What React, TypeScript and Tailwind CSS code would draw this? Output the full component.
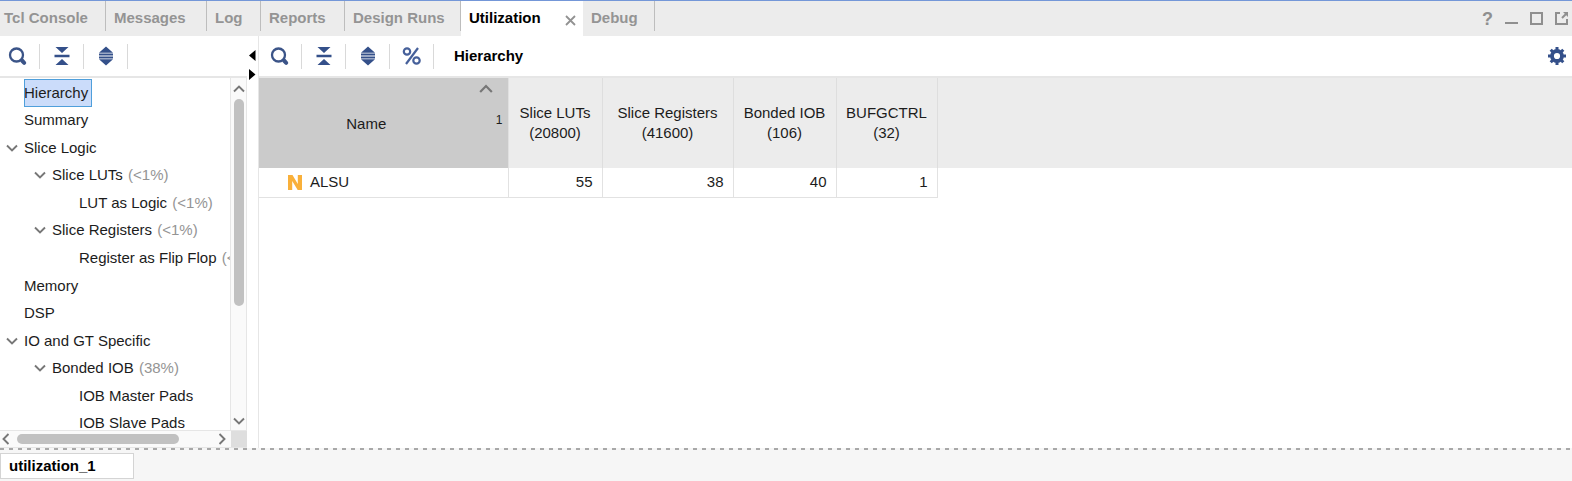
import type { ReactNode } from 'react';

const TABS = [
  { label: 'Tcl Console', cell: 'w-[106px] pl-1' },
  { label: 'Messages', cell: 'w-[101px] pl-2' },
  { label: 'Log', cell: 'w-[54px] pl-2' },
  { label: 'Reports', cell: 'w-[84px] pl-2' },
  { label: 'Design Runs', cell: 'w-[116px] pl-2' },
  { label: 'Utilization', cell: 'w-[122px] pl-2', active: true },
  { label: 'Debug', cell: 'w-[72px] pl-2' },
];

const TREE = [
  { label: 'Hierarchy', depth: 0, selected: true },
  { label: 'Summary', depth: 0 },
  { label: 'Slice Logic', depth: 0, open: true },
  { label: 'Slice LUTs', depth: 1, open: true, note: '(<1%)' },
  { label: 'LUT as Logic', depth: 2, note: '(<1%)' },
  { label: 'Slice Registers', depth: 1, open: true, note: '(<1%)' },
  { label: 'Register as Flip Flop', depth: 2, note: '(<1%)' },
  { label: 'Memory', depth: 0 },
  { label: 'DSP', depth: 0 },
  { label: 'IO and GT Specific', depth: 0, open: true },
  { label: 'Bonded IOB', depth: 1, open: true, note: '(38%)' },
  { label: 'IOB Master Pads', depth: 2 },
  { label: 'IOB Slave Pads', depth: 2 },
];

const INDENT = ['pl-1', 'pl-8', 'pl-[59px]'];

const COLUMNS = [
  { name: 'Slice LUTs', total: '(20800)', value: 55, cell: 'w-[94px]' },
  { name: 'Slice Registers', total: '(41600)', value: 38, cell: 'w-[131px]' },
  { name: 'Bonded IOB', total: '(106)', value: 40, cell: 'w-[103px]' },
  { name: 'BUFGCTRL', total: '(32)', value: 1, cell: 'w-[101px]' },
];

function SearchIcon() {
  return (
    <svg width="20" height="20" viewBox="0 0 20 20" fill="none" stroke="#3b5488">
      <circle cx="8.5" cy="9" r="6.5" strokeWidth="2.3" />
      <path d="M14 14.5 16.2 16.8" strokeWidth="4" strokeLinecap="round" />
    </svg>
  );
}

function CollapseIcon() {
  return (
    <svg width="20" height="20" viewBox="0 0 20 20" fill="#34508a">
      <path d="M3.5 1h13L10 7zM3.500 19h13L10 13zM2.500 8.800h15v2.400h-15z" />
    </svg>
  );
}

function ExpandIcon() {
  return (
    <svg width="20" height="20" viewBox="0 0 20 20" fill="#34508a">
      <path d="M10 .5 17 6.800H3zM10 19.500l7-6.300H3zM3 7.500h14v2H3zM3 10.600h14v2H3z" />
    </svg>
  );
}

function PercentIcon() {
  return (
    <svg width="20" height="20" viewBox="0 0 20 20" fill="none" stroke="#46609a" strokeWidth="2.2">
      <circle cx="5" cy="5.5" r="3.2" />
      <circle cx="14.5" cy="14.5" r="3.2" />
      <path d="M16 2 4 18" />
    </svg>
  );
}

function GearIcon() {
  return (
    <svg width="20" height="20" viewBox="-10 -10 20 20" fill="none" stroke="#34508a">
      <circle r="5" strokeWidth="3.800" />
      <path
        d="M0-9V-6M0 9V6M-9 0H-6M9 0H6M-6.300-6.300-4.500-4.500M6.300-6.300 4.500-4.500M-6.300 6.300-4.500 4.500M6.300 6.300 4.500 4.500"
        strokeWidth="3"
      />
    </svg>
  );
}

function Chevron({ turn = '', size = 12 }: { turn?: string; size?: number }) {
  return (
    <svg className={turn} width={size} height={size} viewBox="0 0 12 12" fill="none" stroke="#777" strokeWidth="1.900">
      <path d="M1 3.500 6 8.500 11 3.500" />
    </svg>
  );
}

function Tool({ label, children }: { label: string; children: ReactNode }) {
  return (
    <div className="flex h-[25px] w-11 items-center border-r border-[#d9d9d9] first:w-10 first:pr-1">
      <button type="button" aria-label={label} className="flex w-full justify-center">
        {children}
      </button>
    </div>
  );
}

function TabBar() {
  return (
    <header className="flex h-9 shrink-0 border-t border-[#7497d8] bg-[#ececec] font-bold">
      <nav className="flex">
        {TABS.map((tab) =>
          tab.active ? (
            <div key={tab.label} className={`flex items-center justify-between bg-white pr-[7px] ${tab.cell}`}>
              <button type="button" className="pb-px text-black">
                {tab.label}
              </button>
              <button type="button" aria-label="Close tab" className="pt-1">
                <svg width="11" height="11" viewBox="0 0 11 11" stroke="#929292" strokeWidth="1.800">
                  <path d="M1 1 10 10M10 1 1 10" />
                </svg>
              </button>
            </div>
          ) : (
            <button
              key={tab.label}
              type="button"
              className={`h-[30px] border-r border-[#bdbdbd] pt-[3px] text-left whitespace-nowrap text-[#949494] ${tab.cell}`}
            >
              {tab.label}
            </button>
          ),
        )}
      </nav>
      <div className="ml-auto flex items-center gap-3 pr-1 text-[#8f8f8f]">
        <button type="button" aria-label="Help" className="text-lg">
          ?
        </button>
        <button type="button" aria-label="Minimize">
          <svg width="13" height="13" viewBox="0 0 13 13" stroke="currentColor" strokeWidth="2">
            <path d="M0 11h13" />
          </svg>
        </button>
        <button type="button" aria-label="Maximize">
          <svg width="13" height="13" viewBox="0 0 13 13" fill="none" stroke="currentColor" strokeWidth="2">
            <path d="M1 1h11v11H1z" />
          </svg>
        </button>
        <button type="button" aria-label="Float">
          <svg width="13" height="13" viewBox="0 0 13 13" fill="none" stroke="currentColor" strokeWidth="2">
            <path d="M5 1H1v11h11V7M7 6l4-4" />
            <path d="M8 0H13v5z" fill="currentColor" stroke="none" />
          </svg>
        </button>
      </div>
    </header>
  );
}

function Sidebar() {
  return (
    <aside className="flex w-[247px] shrink-0 flex-col">
      <div className="flex h-[42px] shrink-0 items-center border-b-2 border-[#e6e6e6]">
        <Tool label="Search">
          <SearchIcon />
        </Tool>
        <Tool label="Collapse all">
          <CollapseIcon />
        </Tool>
        <Tool label="Expand all">
          <ExpandIcon />
        </Tool>
      </div>
      <div className="flex min-h-0 flex-1">
        <ul className="mt-px grid h-[358px] min-w-0 flex-1 auto-rows-fr">
          {TREE.map((node) => (
            <li key={node.label} className={`flex items-center overflow-hidden whitespace-nowrap ${INDENT[node.depth]}`}>
              <span className="flex w-5 shrink-0 pl-[2px]">{node.open && <Chevron />}</span>
              <button
                type="button"
                className={
                  node.selected ? 'h-full bg-[#cbdcfa] pr-1 outline outline-1 -outline-offset-1 outline-[#4f9fdb]' : ''
                }
              >
                {node.label}
                {node.note && <span className="pl-px text-[#949494]"> {node.note}</span>}
              </button>
            </li>
          ))}
        </ul>
        <div className="flex w-[17px] flex-col items-center border-x border-[#e6e6e6] bg-[#fafafa]">
          <span className="flex h-[21px] items-center">
            <Chevron turn="rotate-180" />
          </span>
          <span className="h-[207px] w-[10px] rounded-full bg-[#c1c1c1]" />
          <span className="mt-auto flex h-[19px] items-center">
            <Chevron />
          </span>
        </div>
      </div>
      <div className="z-10 flex h-[18px] shrink-0 border-y border-[#e6e6e6] bg-[#fafafa]">
        <div className="flex flex-1 items-center">
          <span className="flex w-[17px]">
            <Chevron turn="rotate-90" />
          </span>
          <span className="h-[10px] w-[162px] rounded-full bg-[#c1c1c1]" />
          <span className="mr-[3px] ml-auto">
            <Chevron turn="-rotate-90" />
          </span>
        </div>
        <span className="w-4 bg-[#dedede]" />
      </div>
    </aside>
  );
}

function Splitter() {
  return (
    <div className="flex w-3 shrink-0 flex-col items-start border-r border-[#e6e6e6] pt-[14px] pl-[2px]">
      <svg width="7" height="30" viewBox="0 0 7 30">
        <path d="M6.500 0v11L0 5.500zM0 19v11l6.500-5.500z" />
      </svg>
    </div>
  );
}

function Report() {
  return (
    <section className="flex min-w-0 flex-1 flex-col">
      <div className="flex h-[42px] shrink-0 items-center border-b-2 border-[#e6e6e6]">
        <div className="flex pl-[3px]">
          <Tool label="Search">
            <SearchIcon />
          </Tool>
          <Tool label="Collapse all">
            <CollapseIcon />
          </Tool>
          <Tool label="Expand all">
            <ExpandIcon />
          </Tool>
          <Tool label="Show percentage">
            <PercentIcon />
          </Tool>
        </div>
        <h1 className="pl-5 font-bold text-black">Hierarchy</h1>
        <button type="button" aria-label="Settings" className="mr-[5px] ml-auto">
          <GearIcon />
        </button>
      </div>
      <div className="bg-[linear-gradient(#ececec_90px,white_90px)]">
        <table className="table-fixed border-collapse">
          <thead>
            <tr className="h-[90px]">
              <th className="w-[249px] border-r border-[#e0e0e0] bg-[#cbcbcb] p-0 font-normal">
                <div className="grid h-[90px] grid-cols-[1fr_44px]">
                  <span className="flex items-center justify-center pt-[2px] pl-2.5">Name</span>
                  <span className="flex flex-col justify-between pt-1 pr-[5px] pb-[42px]">
                    <Chevron turn="rotate-180 ml-[15px]" size={14} />
                    <span className="text-right text-xs leading-3">1</span>
                  </span>
                </div>
              </th>
              {COLUMNS.map((column) => (
                <th
                  key={column.name}
                  className={`border-r border-[#dedede] p-0 leading-5 font-normal whitespace-nowrap ${column.cell}`}
                >
                  {column.name}
                  <br />
                  {column.total}
                </th>
              ))}
            </tr>
          </thead>
          <tbody>
            <tr className="h-[29px] border-b border-[#e2e2e2] bg-white">
              <td className="border-r border-[#e2e2e2] p-0">
                <div className="flex items-center gap-2 pl-[29px]">
                  <svg width="14" height="15" viewBox="0 0 14 15" fill="#f9b03a">
                    <path d="M0 0h4.500L9.800 9V0H14v15H9.700L4.200 6v9H0z" />
                  </svg>
                  ALSU
                </div>
              </td>
              {COLUMNS.map((column) => (
                <td key={column.name} className="border-r border-[#e2e2e2] py-0 pr-[9px] text-right">
                  {column.value}
                </td>
              ))}
            </tr>
          </tbody>
        </table>
      </div>
    </section>
  );
}

export default function App() {
  return (
    <div className="flex h-screen flex-col overflow-hidden bg-white font-['Liberation_Sans',Arial,sans-serif] text-[15px] leading-5 text-[#1c1c1c]">
      <TabBar />
      <main className="flex min-h-0 flex-1 overflow-hidden">
        <Sidebar />
        <Splitter />
        <Report />
      </main>
      <footer className="h-[33px] shrink-0 bg-[#f6f6f6] bg-[repeating-linear-gradient(90deg,#a8a8a8_0_4px,transparent_4px_9px)] bg-size-[100%_2px] bg-no-repeat pt-[5px]">
        <button
          type="button"
          className="h-[26px] w-[134px] border border-[#d4d4d4] bg-white pl-2 text-left font-bold text-black"
        >
          utilization_1
        </button>
      </footer>
    </div>
  );
}
